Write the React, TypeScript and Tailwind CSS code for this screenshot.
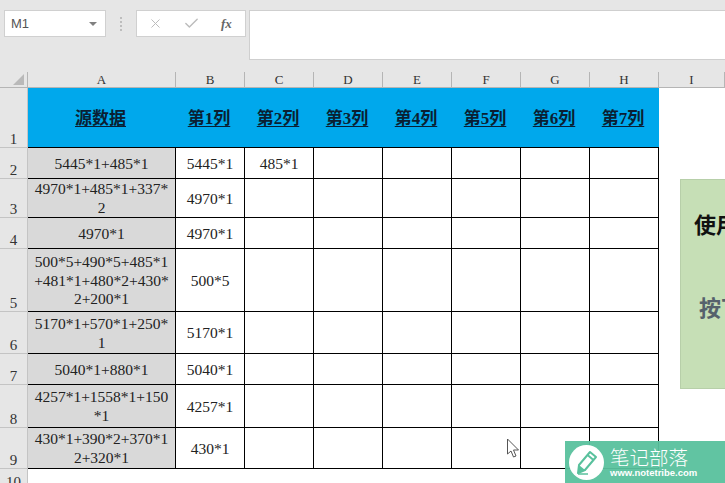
import { Check, X } from "lucide-react";

const columns = ["A", "B", "C", "D", "E", "F", "G", "H"];
const headers = ["源数据", "第1列", "第2列", "第3列", "第4列", "第5列", "第6列", "第7列"];

const rows = [
  { n: 2, source: ["5445*1+485*1"], b: "5445*1", c: "485*1" },
  { n: 3, source: ["4970*1+485*1+337*", "2"], b: "4970*1", c: "" },
  { n: 4, source: ["4970*1"], b: "4970*1", c: "" },
  { n: 5, source: ["500*5+490*5+485*1", "+481*1+480*2+430*", "2+200*1"], b: "500*5", c: "" },
  { n: 6, source: ["5170*1+570*1+250*", "1"], b: "5170*1", c: "" },
  { n: 7, source: ["5040*1+880*1"], b: "5040*1", c: "" },
  { n: 8, source: ["4257*1+1558*1+150", "*1"], b: "4257*1", c: "" },
  { n: 9, source: ["430*1+390*2+370*1", "2+320*1"], b: "430*1", c: "" },
];

function RowNumber({ n }: { n: number }) {
  return (
    <div className="flex items-end justify-center border-r border-b border-[#c4c4c4] bg-[#e6e6e6] text-[15px] leading-[15px] text-[#333333]">
      {n}
    </div>
  );
}

function Cell({ children, gray }: { children?: React.ReactNode; gray?: boolean }) {
  return (
    <div
      className={`flex flex-col items-center justify-center border-r border-b border-black pt-[2px] text-[15.5px] leading-[18.7px] whitespace-nowrap text-[#222222] ${
        gray ? "bg-[#d9d9d9]" : "bg-white"
      }`}
    >
      {children}
    </div>
  );
}

function FormulaBar() {
  return (
    <div className="flex h-[72px] items-start bg-[#e6e6e6] pt-[10px] pl-1 font-['Liberation_Sans',sans-serif]">
      <div className="flex h-[27px] w-[102px] items-center justify-between border border-[#d0d0d0] bg-white pr-[8px] pl-[6px] text-[13px] text-[#555555]">
        <span>M1</span>
        <span className="h-0 w-0 border-x-[4px] border-t-[4px] border-x-transparent border-t-[#808080]" />
      </div>
      <div className="flex h-[27px] w-[30px] flex-col items-center justify-center gap-[2px]">
        <span className="h-[2px] w-[2px] bg-[#bdbdbd]" />
        <span className="h-[2px] w-[2px] bg-[#bdbdbd]" />
        <span className="h-[2px] w-[2px] bg-[#bdbdbd]" />
        <span className="h-[2px] w-[2px] bg-[#bdbdbd]" />
      </div>
      <div className="flex h-[27px] w-[110px] items-center border border-[#d0d0d0] bg-white pl-[11px] text-[#bcbcbc]">
        <X size={15} strokeWidth={1.6} />
        <Check size={17} strokeWidth={2} className="ml-[20px]" />
        <span className="ml-[21px] font-['Liberation_Serif',serif] text-[13px] font-bold text-[#666666] italic">
          fx
        </span>
      </div>
      <div className="ml-[3px] h-[50px] flex-1 border-y border-l border-[#cfcfcf] bg-white" />
    </div>
  );
}

function Watermark() {
  return (
    <div className="absolute right-0 bottom-0 flex h-[42px] w-[160px] items-center bg-[#59c19d]/95 pl-[4px] text-white">
      <svg width="35" height="35" viewBox="0 0 35 35">
        <circle cx="17.5" cy="17.5" r="17.5" fill="#ffffff" />
        <path d="M21 7l6 5-11 13-7 3 1-8z" fill="none" stroke="#59c19d" strokeWidth="2" strokeLinejoin="round" />
        <path d="M18.5 10l6 5" stroke="#59c19d" strokeWidth="2" />
        <path d="M10 20l6 5-7 3z" fill="#59c19d" />
        <path d="M9 29h10" stroke="#59c19d" strokeWidth="1.5" />
      </svg>
      <div className="ml-[6px] flex flex-col">
        <span className="font-['Noto_Sans_CJK_SC',sans-serif] text-[19.5px] leading-[20px] font-light">笔记部落</span>
        <span className="font-['Liberation_Sans',sans-serif] text-[9.5px] leading-[11px] font-bold">www.notetribe.com</span>
      </div>
    </div>
  );
}

export default function App() {
  return (
    <div className="relative h-[483px] w-[725px] overflow-hidden bg-white font-['Liberation_Serif','Noto_Sans_CJK_SC',serif]">
      <FormulaBar />

      <div className="grid grid-cols-[28px_148px_69px_69px_69px_69px_69px_69px_69px_1fr] grid-rows-[16px_60px_31px_39px_31px_63px_42px_31px_43px_41px_22px]">
        {/* column letters */}
        <div className="relative border-r border-b border-[#b5b5b5] bg-[#e6e6e6]">
          <span className="absolute right-[3px] bottom-[2px] h-0 w-0 border-t-[11px] border-l-[11px] border-t-transparent border-l-transparent [border-right:11px_solid_#b9b9b9]" />
        </div>
        {[...columns, "I"].map((col) => (
          <div
            key={col}
            className="flex items-center justify-center border-r border-b border-[#b5b5b5] bg-[#e6e6e6] text-[13px] leading-none text-[#333333]"
          >
            {col}
          </div>
        ))}

        {/* title row */}
        <RowNumber n={1} />
        {headers.map((title) => (
          <div
            key={title}
            className="flex items-center justify-center border-b border-black bg-[#00a8ec] pt-[3px] pr-[3px] text-[17px] font-bold text-[#0a1f33] underline underline-offset-2"
          >
            {title}
          </div>
        ))}
        <div />

        {rows.map((row) => (
          <div key={row.n} className="contents">
            <RowNumber n={row.n} />
            <Cell gray>
              {row.source.map((line) => (
                <span key={line}>{line}</span>
              ))}
            </Cell>
            <Cell>{row.b}</Cell>
            <Cell>{row.c}</Cell>
            <Cell />
            <Cell />
            <Cell />
            <Cell />
            <Cell />
            <div />
          </div>
        ))}

        <RowNumber n={10} />
      </div>

      {/* note box, runs off the right edge */}
      <div className="absolute top-[179px] left-[680px] h-[210px] w-[200px] border border-[#b7cfa9] bg-[#c6dfb6] pt-[29px] pl-[13px] font-['Noto_Sans_CJK_SC',sans-serif] text-[22px] font-bold whitespace-nowrap">
        <div className="leading-[28px] text-[#111111]">使用方法</div>
        <div className="mt-[55px] pl-[5px] leading-[28px] text-[#55626c]">按下按键</div>
      </div>

      {/* mouse pointer */}
      <svg className="absolute top-[438px] left-[506px]" width="15" height="22" viewBox="0 0 15 22">
        <path d="M1.5 1v15l3.5-3 2.5 6 2.5-1-2.5-6h5z" fill="#ffffff" stroke="#555555" strokeWidth="1" strokeLinejoin="round" />
      </svg>

      <Watermark />
    </div>
  );
}
